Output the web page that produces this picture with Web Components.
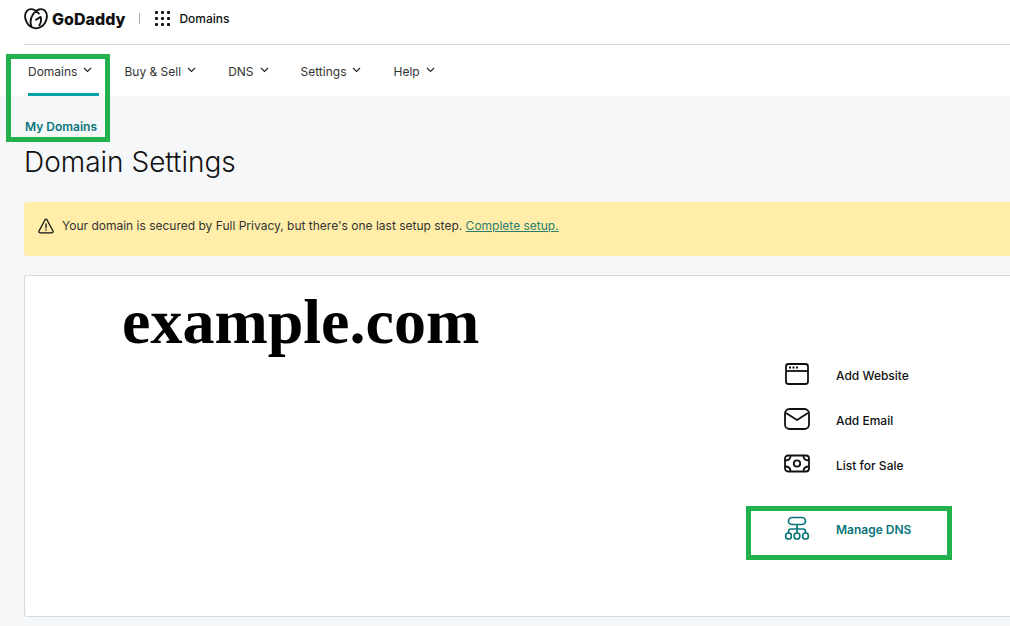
<!DOCTYPE html>
<html lang="en">
<head>
<meta charset="utf-8">
<title>Domain Settings</title>
<style>
body{margin:0;background:#f5f7f8;color:#111;font:12px/20px Inter,"Liberation Sans",sans-serif;overflow-x:hidden}
</style>
</head>
<body>
<domain-page></domain-page>
<script>
const define = (name, html) => customElements.define(name, class extends HTMLElement {
  constructor() {
    super();
    const t = document.createElement('template');
    t.innerHTML = html;
    this.attachShadow({ mode: 'open' }).append(t.content.cloneNode(true));
  }
});

define('top-bar', `
<style>
:host{display:block;background:#fff;padding-left:24px}
header{display:flex;height:44px;border-bottom:1px solid #d4dbe0}
.in{display:flex;align-items:center;height:37px}
.logo{display:flex;align-items:center;gap:4px;color:#111;text-decoration:none;font:800 16px/20px Inter,sans-serif}
.sep{width:1px;height:11px;background:#aab0b5;margin:0 15px 0 14px}
button{display:flex;align-items:center;gap:8px;border:0;background:none;padding:0;font:500 12px/20px Inter,sans-serif;color:#111}
svg{display:block}
</style>
<header><div class="in">
<a class="logo" href="#"><svg width="24" height="22" viewBox="0 0 24 22" fill="none" stroke="#111" stroke-width="1.900" stroke-linecap="round" stroke-linejoin="round"><path d="M14.800 5.600C12 1.200 6 -.4 3 2.800C-.8 7 1.600 15.500 7 18.800C10.200 20.800 13.800 20.800 17 18.800C22.400 15.500 24.800 7 21 2.800C17.500 -.6 12 1.600 9 6.200C6.500 10 6 14.500 7.300 18.300"/><path d="M12 11.800L16.600 8.900C17.500 11.800 17 14.800 15.400 17.200"/></svg><span>GoDaddy</span></a>
<span class="sep"></span>
<button type="button"><svg width="16" height="16" viewBox="0 0 16 16" fill="#111"><g id="d"><rect x="0" y="0" width="3" height="3" rx="1"/><rect x="6" y="0" width="3" height="3" rx="1"/><rect x="12" y="0" width="3" height="3" rx="1"/></g><use href="#d" y="6"/><use href="#d" y="12"/></svg><slot></slot></button>
</div></header>`);

define('nav-item', `
<style>
:host{display:flex}
button{display:flex;align-items:center;gap:6px;border:0;border-bottom:3px solid transparent;background:none;padding:5px 7px 0 0;margin:0;font:12px/20px Inter,sans-serif;color:#333}
:host([current]) button{border-bottom-color:#00a4a6}
svg{margin-bottom:4px}
</style>
<button type="button"><slot></slot><svg width="9" height="6" viewBox="0 0 9 6" fill="none" stroke="#222" stroke-width="1.100"><path d="M1 1L4.500 4.500L8 1"/></svg></button>`);

define('site-nav', `
<style>:host{display:block;background:#fff}nav{display:flex;height:51px;gap:25px;padding-left:28px}</style>
<nav><slot></slot></nav>`);

define('notice-bar', `
<style>
:host{display:flex;gap:8px;min-height:40px;margin:22px 0 19px;padding:14px 14px 0;background:#ffeda9;border-radius:3px 0 0 3px;color:#333}
svg{margin-top:2px}
</style>
<svg width="16" height="16" viewBox="0 0 16 16" fill="none" stroke="#111" stroke-width="1.300" stroke-linejoin="round" stroke-linecap="round"><path d="M7.200 1.500Q8 .6 8.800 1.500L15 13Q15.500 14.600 14 14.800H2Q.5 14.600 1 13Z"/><path d="M8 6V10M8 12V12.300"/></svg>
<div><slot></slot></div>`);

define('domain-card', `
<style>
:host{display:flex;justify-content:space-between;box-sizing:border-box;min-height:342px;background:#fff;border:1px solid #d4dbe0;border-right:0;border-radius:3px 0 0 3px;padding:8px 58px 56px 97px}
::slotted(h2){margin:0;font:bold 64px/76px "Liberation Serif",serif;color:#000}
.actions{width:206px;padding-top:69px}
</style>
<slot name="name"></slot><div class="actions"><slot></slot></div>`);

define('domain-action', `
<style>
:host{display:block;color:#111}
a{display:flex;align-items:center;gap:26px;height:45px;padding-left:33px;border:solid transparent;border-width:0 5px;color:inherit;text-decoration:none;font:500 12px/20px Inter,sans-serif}
:host([marked]){color:#09757a;margin-top:18px}
:host([marked]) a{box-sizing:border-box;height:54px;padding-bottom:6px;border:5px solid #22b14c;font-weight:600}
::slotted(svg){margin-bottom:4px}
</style>
<a href="#"><slot name="icon"></slot><slot></slot></a>`);

define('domain-page', `
<style>
:host{display:block;position:relative}
main{padding:20px 0 9px 24px}
.crumb{display:block;margin-left:1px;color:#09757a;font-weight:600;font-size:12px;line-height:22px;text-decoration:none}
h1{margin:2px 0 0;padding-top:4px;font:300 28px/36px Inter,sans-serif}
.setup{color:#2c7d70}
.mark{position:absolute;left:6px;top:54px;width:94px;height:78px;border:5px solid #22b14c;pointer-events:none}
</style>
<top-bar>Domains</top-bar>
<site-nav><nav-item current>Domains</nav-item><nav-item>Buy &amp; Sell</nav-item><nav-item>DNS</nav-item><nav-item>Settings</nav-item><nav-item>Help</nav-item></site-nav>
<main>
<a class="crumb" href="#">My Domains</a>
<h1>Domain Settings</h1>
<notice-bar>Your domain is secured by Full Privacy, but there's one last setup step. <a class="setup" href="#">Complete setup.</a></notice-bar>
<domain-card>
<h2 slot="name">example.com</h2>
<domain-action><svg slot="icon" width="26" height="24" viewBox="0 0 26 24" fill="none" stroke="#111" stroke-width="1.800"><rect x="2" y="2" width="22" height="20" rx="2.500"/><path d="M2 9H24"/><path d="M5 5.500H7M8.500 5.500H10.500M12 5.500H14"/></svg>Add Website</domain-action>
<domain-action><svg slot="icon" width="26" height="24" viewBox="0 0 26 24" fill="none" stroke="#111" stroke-width="1.800" stroke-linejoin="round"><rect x="1" y="2" width="24" height="20" rx="4.500"/><path d="M2 6L13 13L24 6"/></svg>Add Email</domain-action>
<domain-action><svg slot="icon" width="26" height="24" viewBox="0 0 26 24" fill="none" stroke="#111" stroke-width="1.800"><rect x="1" y="3.500" width="24" height="16" rx="3"/><circle cx="13" cy="11.500" r="3.200"/><path d="M6.500 4Q6.500 8.500 1 8.500M19.500 4Q19.500 8.500 25 8.500M6.500 19.500Q6.500 14.500 1 14.500M19.500 19.500Q19.500 14.500 25 14.500"/></svg>List for Sale</domain-action>
<domain-action marked><svg slot="icon" width="26" height="24" viewBox="0 0 26 24" fill="none" stroke="#09757a" stroke-width="1.700"><rect x="4.500" y="1.500" width="17" height="7" rx="3.500"/><path d="M13 8.500V17M4.500 17V15.500Q4.500 13 7 13H19Q21.500 13 21.500 15.500V17"/><rect x="1.700" y="17" width="5.600" height="6" rx="2.600"/><rect x="10.200" y="17" width="5.600" height="6" rx="2.600"/><rect x="18.700" y="17" width="5.600" height="6" rx="2.600"/></svg>Manage DNS</domain-action>
</domain-card>
</main>
<div class="mark"></div>`);
</script>
</body>
</html>
